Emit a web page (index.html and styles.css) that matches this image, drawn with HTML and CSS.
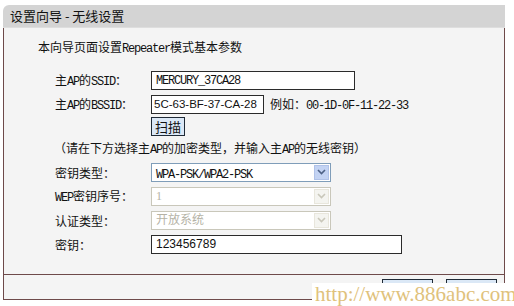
FILE: index.html
```html
<!DOCTYPE html>
<html lang="zh-CN">
<head>
    <meta charset="UTF-8">
    <title>设置向导 - 无线设置</title>
    <link rel="stylesheet" href="styles.css">
</head>
<body>

    <div class="wizard">
        <div class="title">设置向导 - 无线设置</div>

        <div class="panel">
            <p class="intro">本向导页面设置<span class="en">Repeater</span>模式基本参数</p>

            <div class="row">
                <span class="label">主<span class="en">AP</span>的<span class="en">SSID</span>：</span>
                <div class="field wide ssid"><span class="en">MERCURY_37CA28</span></div>
            </div>
            <div class="row">
                <span class="label">主<span class="en">AP</span>的<span class="en">BSSID</span>：</span>
                <div class="field short">5C-63-BF-37-CA-28</div>
                <span class="hint">例如：<span class="en">00-1D-0F-11-22-33</span></span>
            </div>
            <div class="row scan-row">
                <span class="label"></span>
                <button class="btn">扫描</button>
            </div>
            <p class="note">（请在下方选择主<span class="en">AP</span>的加密类型，并输入主<span class="en">AP</span>的无线密钥）</p>

            <div class="row">
                <span class="label">密钥类型：</span>
                <div class="select">
                    <span class="value"><span class="en">WPA-PSK/WPA2-PSK</span></span>
                    <span class="arrow"><svg width="9" height="6" viewBox="0 0 9 6"><path d="M1 1l3.5 3.5L8 1" fill="none" stroke="#4d6185" stroke-width="1.6"/></svg></span>
                </div>
            </div>
            <div class="row">
                <span class="label"><span class="en">WEP</span>密钥序号：</span>
                <div class="select disabled">
                    <span class="value">1</span>
                    <span class="arrow"><svg width="9" height="6" viewBox="0 0 9 6"><path d="M1 1l3.5 3.5L8 1" fill="none" stroke="#c9c7ba" stroke-width="1.6"/></svg></span>
                </div>
            </div>
            <div class="row">
                <span class="label">认证类型：</span>
                <div class="select disabled">
                    <span class="value">开放系统</span>
                    <span class="arrow"><svg width="9" height="6" viewBox="0 0 9 6"><path d="M1 1l3.5 3.5L8 1" fill="none" stroke="#c9c7ba" stroke-width="1.6"/></svg></span>
                </div>
            </div>
            <div class="row">
                <span class="label">密钥：</span>
                <div class="field key">123456789</div>
            </div>
        </div>

        <div class="footer">
            <button class="btn nav">上一步</button>
            <button class="btn nav">下一步</button>
        </div>
    </div>

    <div class="watermark">http://www.886abc.com</div>

</body>
</html>
```

FILE: styles.css
```css
body {
    margin: 0;
    background: #fff;
    font-family: "Noto Sans CJK SC", sans-serif;
    font-size: 12px;
    color: #111;
    width: 514px;
    height: 306px;
    overflow: hidden;
    position: relative;
}
.en {
    font-family: "Liberation Mono", monospace;
    letter-spacing: -1.2px;
}
.wizard {
    margin: 5px 0 0 3px;
    width: 502px;
}
.title {
    height: 22px;
    line-height: 22px;
    background: #d4d4d4;
    border-top-left-radius: 6px;
    border-bottom: 1px solid #dedede;
    padding-left: 7px;
    font-size: 13px;
    color: #111;
}
.panel {
    height: 246px;
    background: #f4f4f4;
    border-left: 1px solid #6e4a4a;
    border-right: 1px solid #6e4a4a;
    padding-top: 11px;
    box-sizing: border-box;
}
.intro {
    margin: 0 0 11px 34px;
    line-height: 16px;
}
.row {
    display: flex;
    align-items: center;
    height: 24px;
}
.label {
    width: 96px;
    padding-left: 51px;
    flex-shrink: 0;
}
.field {
    height: 19px;
    box-sizing: border-box;
    border: 1px solid #2b2b2b;
    background: #fff;
    line-height: 17px;
    padding-left: 4px;
    font-family: "Liberation Sans", sans-serif;
    font-size: 12px;
    white-space: nowrap;
    overflow: hidden;
}
.wide { width: 204px; }
.short { width: 113px; padding-left: 2px; font-size: 11.5px; }
.key { width: 251px; }
.hint {
    margin-left: 6px;
}
.scan-row { height: 20px; }
.btn {
    font-family: "Noto Sans CJK SC", sans-serif;
    font-size: 13px;
    background: #dbe8f6;
    border: 1px solid #1f2a36;
    padding: 0 3px;
    height: 19px;
    line-height: 15px;
    color: #111;
}
.note {
    margin: 0 0 0 50px;
    height: 24px;
    line-height: 24px;
}
.select {
    display: flex;
    width: 180px;
    height: 19px;
    box-sizing: border-box;
    border: 1px solid #7f9db9;
    background: #fff;
}
.select .value {
    flex: 1;
    padding-left: 4px;
    line-height: 17px;
}
.select .arrow {
    width: 15px;
    margin: 1px;
    background: #c3d3f3;
    border: 1px solid #b0c2e8;
    box-sizing: border-box;
    display: flex;
    align-items: center;
    justify-content: center;
}
.select.disabled {
    border-color: #c9c7ba;
    color: #b5b3a6;
}
.select.disabled .value {
    font-family: "Liberation Serif", "Noto Sans CJK SC", serif;
}
.select.disabled .arrow {
    background: #f4f4f0;
    border-color: #e8e6dc;
}
.footer {
    height: 26px;
    box-sizing: border-box;
    border: 1px solid #6e4a4a;
    background: #f4f4f4;
    display: flex;
    justify-content: flex-end;
    gap: 13px;
    padding: 4px 7px 0 0;
}
.nav {
    width: 51px;
    height: 19px;
    font-size: 12px;
}
.watermark {
    position: absolute;
    left: 312px;
    top: 283px;
    width: 202px;
    height: 23px;
    background: #fff;
    color: #dfc27c;
    font-family: "Liberation Serif", serif;
    font-size: 21px;
    line-height: 23px;
    padding-left: 3px;
    box-sizing: border-box;
}
```
